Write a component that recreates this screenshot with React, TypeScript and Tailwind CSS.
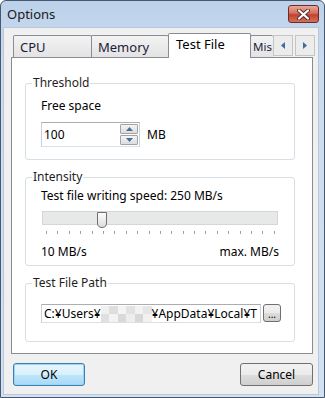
import React from "react";

const btnGray =
  "bg-[linear-gradient(to_bottom,#f2f2f2_0%,#ebebeb_50%,#dddddd_51%,#cfcfcf_100%)] border border-[#707070] rounded-[3px]";

function Tab({ label, width, selected, pad = "pl-[6px]" }: { label: string; width: string; selected?: boolean; pad?: string }) {
  if (selected) {
    return (
      <div className={`${width} h-[25px] -mb-px -ml-px relative z-10 bg-white border-x border-t border-[#898c95] rounded-t-[2px] pl-[7px] pt-[2px] leading-[17px] text-[13px]`}>
        {label}
      </div>
    );
  }
  return (
    <div className={`${width} ${pad} h-[22px] -ml-px first:ml-0 border-x border-t border-[#898c95] rounded-t-[2px] bg-[linear-gradient(to_bottom,#f3f3f3,#e3e3e3)] pt-[3px] leading-[16px] text-[#1b1b3a] overflow-hidden whitespace-nowrap`}>
      {label}
    </div>
  );
}

function ArrowBtn({ dir }: { dir: "left" | "right" }) {
  return (
    <div className="self-start mt-[2px] w-[20px] h-[21px] border border-[#c5c5c5] bg-[#ececec] flex items-center justify-center">
      <svg width="4" height="7" viewBox="0 0 4 7">
        {dir === "left" ? <path d="M4 0 L0 3.5 L4 7 Z" fill="#3f6c9e" /> : <path d="M0 0 L4 3.5 L0 7 Z" fill="#3f6c9e" />}
      </svg>
    </div>
  );
}

function Group({ title, className, children }: { title: string; className: string; children: React.ReactNode }) {
  return (
    <fieldset className={`ml-[13px] w-[270px] border border-[#d5dfe5] rounded-[3px] pl-[15px] ${className}`}>
      <legend className="-ml-[9px] px-[1px] leading-[14px] text-[#1e1e1e]">{title}</legend>
      {children}
    </fieldset>
  );
}

export default function App() {
  const ticks = Array.from({ length: 21 });
  return (
    <div className="w-[325px] h-[398px] font-['Noto_Sans',sans-serif] text-[12px] text-black">
      <div className="h-full flex flex-col border border-[#47596f] rounded-t-[6px] bg-[linear-gradient(to_bottom,#bcd1ea,#cbdcef_60px,#d3e2f2)]">
        {/* title bar */}
        <div className="h-[26px] flex items-start justify-between pl-[6px] pr-[5px]">
          <span className="mt-[4px] text-[13px] leading-[18px] text-[#1a1a1a]">Options</span>
          <div className="mt-[4px] w-[31px] h-[18px] rounded-[3px] border border-[#6e2b22] bg-[linear-gradient(to_bottom,#e9a99a,#d46f5e_45%,#c2412e_55%,#d3705c)] flex items-center justify-center">
            <svg width="13" height="11" viewBox="0 0 13 11">
              <path d="M2 1.5 L11 9.5 M11 1.5 L2 9.5" stroke="#5a2a24" strokeWidth="4" strokeLinecap="round" />
              <path d="M2 1.5 L11 9.5 M11 1.5 L2 9.5" stroke="#ffffff" strokeWidth="2.2" strokeLinecap="round" />
            </svg>
          </div>
        </div>

        {/* client area */}
        <div className="flex-1 ml-[2px] mr-[5px] mb-[2px] bg-[#f0f0f0] border border-[#b8c8da] flex flex-col">
          {/* tab strip */}
          <div className="mt-[5px] ml-[9px] h-[24px] flex items-end">
            <Tab label="CPU" width="w-[79px] text-[13px]" />
            <Tab label="Memory" width="w-[78px] text-[13px]" />
            <Tab label="Test File" width="w-[83px]" selected />
            <Tab label="Mis" width="w-[23px] border-r-0 text-[11.5px]" pad="pl-[2px]" />
            <ArrowBtn dir="left" />
            <div className="w-[2px]" />
            <ArrowBtn dir="right" />
          </div>

          {/* panel */}
          <div className="ml-[7px] w-[302px] h-[297px] bg-white border border-[#898c95] flex flex-col">
            <Group title="Threshold" className="mt-[18px] pb-[12px]">
              <div className="mt-[9px] leading-[14px]">Free space</div>
              <div className="mt-[9px] flex items-center gap-[7px]">
                <div className="w-[99px] h-[25px] border border-[#abadb3] border-b-[#dbdfe6] border-x-[#c9d2dc] bg-white flex items-center pl-[2px] pr-[1px]">
                  <span className="flex-1 leading-[14px]">100</span>
                  <div className="w-[18px] flex flex-col gap-[1px]">
                    <div className="h-[10px] border border-[#a3a3a3] rounded-[1px] bg-[linear-gradient(to_bottom,#f4f4f4,#dcdcdc)] flex items-center justify-center">
                      <svg width="7" height="4" viewBox="0 0 7 4"><path d="M0 4 L3.5 0 L7 4 Z" fill="#4a6f96" /></svg>
                    </div>
                    <div className="h-[10px] border border-[#a3a3a3] rounded-[1px] bg-[linear-gradient(to_bottom,#f4f4f4,#dcdcdc)] flex items-center justify-center">
                      <svg width="7" height="4" viewBox="0 0 7 4"><path d="M0 0 L3.5 4 L7 0 Z" fill="#4a6f96" /></svg>
                    </div>
                  </div>
                </div>
                <span className="leading-[14px]">MB</span>
              </div>
            </Group>

            <Group title="Intensity" className="mt-[10px] pb-[6px]">
              <div className="mt-[5px] leading-[14px]">Test file writing speed: 250 MB/s</div>
              <div className="relative mt-[8px] ml-[1px] w-[236px] h-[14px] bg-[#e7e8e8] border border-[#d6d6d6]">
                <svg className="absolute left-[54px] top-0" width="10" height="16" viewBox="0 0 10 16">
                  <defs>
                    <linearGradient id="th" x1="0" y1="0" x2="0" y2="1">
                      <stop offset="0" stopColor="#fdfdfd" />
                      <stop offset="1" stopColor="#dcdcdc" />
                    </linearGradient>
                  </defs>
                  <path d="M0.5 0.5 H9.5 V11 Q9.5 15.5 5 15.5 Q0.5 15.5 0.5 11 Z" fill="url(#th)" stroke="#707070" />
                </svg>
              </div>
              <div className="mt-[6px] ml-[5px] w-[229px] h-[3px] flex justify-between">
                {ticks.map((_, i) => (
                  <div key={i} className="w-px h-[3px] bg-[#a0a0a0]" />
                ))}
              </div>
              <div className="mt-[11px] w-[238px] flex justify-between leading-[14px]">
                <span>10 MB/s</span>
                <span>max. MB/s</span>
              </div>
            </Group>

            <Group title="Test File Path" className="mt-[10px] pb-[18px]">
              <div className="mt-[14px] flex items-start gap-[2px]">
                <div className="w-[220px] shrink-0 h-[19px] border border-[#abadb3] border-b-[#dbdfe6] border-x-[#c9d2dc] bg-white pl-[2px] flex items-center overflow-hidden whitespace-nowrap leading-[14px]">
                  <span>C:¥Users¥</span>
                  <span className="shrink-0 w-[51px] h-[16px] grid grid-cols-6 grid-rows-2">
                    <span className="bg-[#f0f0f0]" />
                    <span className="bg-[#dedede]" />
                    <span className="bg-[#f4f4f4]" />
                    <span className="bg-[#e2e2e2]" />
                    <span className="bg-[#f2f2f2]" />
                    <span className="bg-[#e6e6e6]" />
                    <span className="bg-[#e0e0e0]" />
                    <span className="bg-[#f3f3f3]" />
                    <span className="bg-[#d9d9d9]" />
                    <span className="bg-[#eeeeee]" />
                    <span className="bg-[#d8d8d8]" />
                    <span className="bg-[#f1f1f1]" />
                  </span>
                  <span>¥AppData¥Local¥T</span>
                </div>
                <div className={`${btnGray} w-[18px] h-[18px] rounded-[2px] flex items-end justify-center text-[10px] leading-[12px] pb-[1px]`}>...</div>
              </div>
            </Group>
          </div>

          {/* bottom buttons */}
          <div className="mt-[9px] ml-[9px] mr-[5px] flex justify-between">
            <button className="w-[72px] h-[23px] rounded-[3px] border border-[#3c7fb1] bg-[linear-gradient(to_bottom,#eaf6fd_0%,#d9f0fc_50%,#bee6fd_51%,#a7d9f5_100%)] shadow-[inset_0_0_0_1px_#9ed4f3] text-[12px] leading-[14px]">
              OK
            </button>
            <button className={`${btnGray} w-[73px] h-[23px] text-[12px] leading-[14px]`}>Cancel</button>
          </div>
        </div>
      </div>
    </div>
  );
}
